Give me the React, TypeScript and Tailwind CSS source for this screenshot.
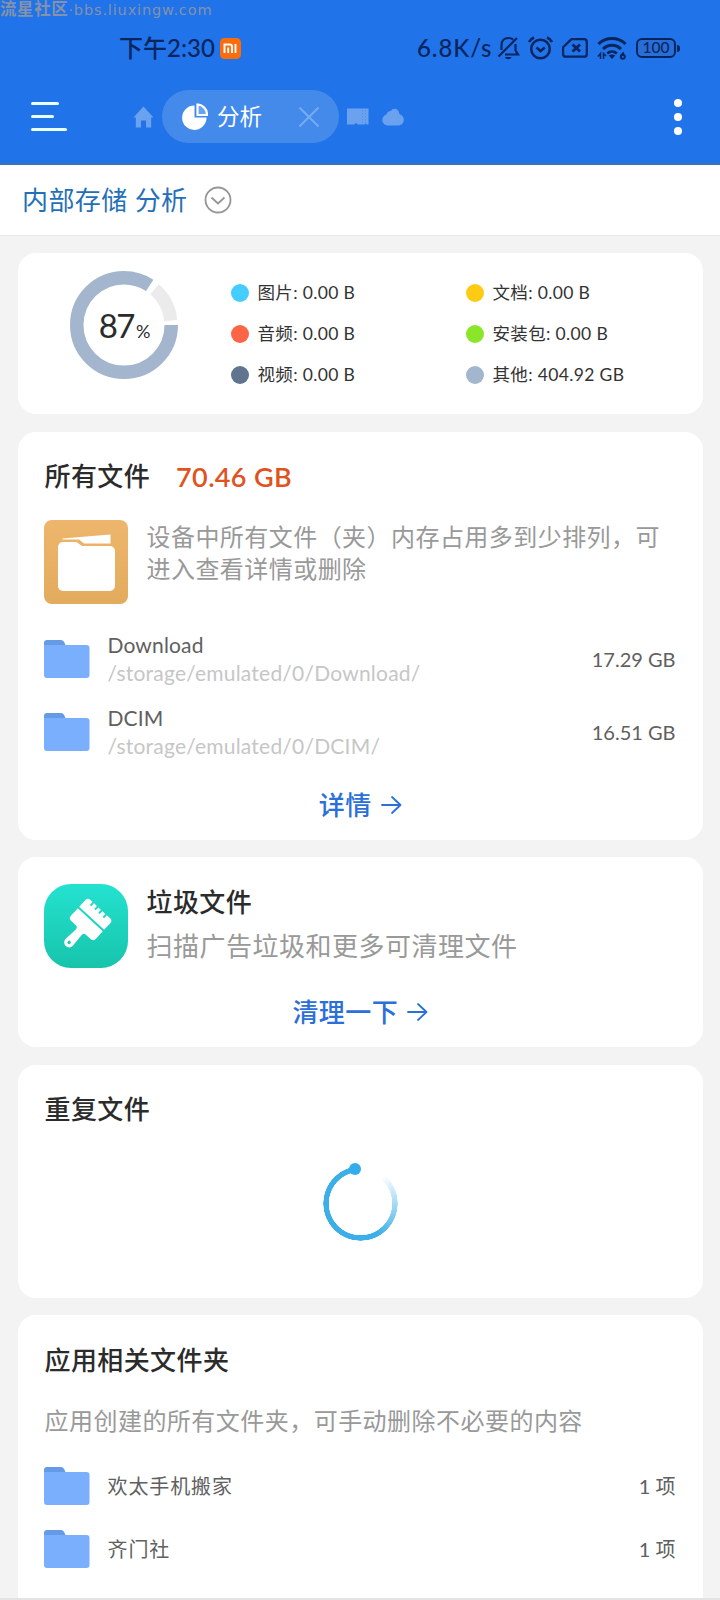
import React, { ReactNode } from "react";

const LEGEND = [
  { label: "图片: 0.00 B", dot: "bg-[#46cdff]" },
  { label: "文档: 0.00 B", dot: "bg-[#fdcb14]" },
  { label: "音频: 0.00 B", dot: "bg-[#fd6546]" },
  { label: "安装包: 0.00 B", dot: "bg-[#8be62a]" },
  { label: "视频: 0.00 B", dot: "bg-[#60748f]" },
  { label: "其他: 404.92 GB", dot: "bg-[#a2b6cd]" },
];

const FILES = [
  { name: "Download", path: "/storage/emulated/0/Download/", size: "17.29 GB" },
  { name: "DCIM", path: "/storage/emulated/0/DCIM/", size: "16.51 GB" },
];

const APP_FOLDERS = [
  { name: "欢太手机搬家", count: "1 项" },
  { name: "齐门社", count: "1 项" },
];

const Card = ({ children, className = "" }: { children: ReactNode; className?: string }) => (
  <section className={`bg-white rounded-[18px] pl-[26.5px] pr-[27px] shrink-0 ${className}`}>{children}</section>
);

const FolderIcon = () => (
  <svg width="46" height="38" viewBox="0 0 46 38" className="shrink-0">
    <path d="M0 3a3 3 0 0 1 3-3h13c3 0 4 1 5.500 5l2 5H0z" fill="#659ae6" />
    <path d="M0 5h42.500a3 3 0 0 1 3 3v27a3 3 0 0 1-3 3H3a3 3 0 0 1-3-3z" fill="#7aaffd" />
  </svg>
);

const Action = ({ label, className = "" }: { label: string; className?: string }) => (
  <div className={`flex items-center justify-center gap-[9px] text-[#2a70d8] ${className}`}>
    <span className="text-[26px] leading-none font-medium tracking-[0.4px]">{label}</span>
    <svg width="21" height="20" viewBox="0 0 21 20" fill="none" stroke="currentColor" strokeWidth="1.8" strokeLinecap="round" strokeLinejoin="round">
      <path d="M1 10h18.500M11 2l8.500 8-8.500 8" />
    </svg>
  </div>
);

const StatusBar = () => (
  <div className="flex h-[48px] items-center pl-[119px] text-[#08255f]">
    <span className="w-[101px] whitespace-nowrap text-[24px] leading-none font-medium">下午2:30</span>
    <svg width="21" height="21" viewBox="0 0 21 21">
      <rect width="21" height="21" rx="4.500" fill="#fb6c0c" />
      <path d="M4.500 15V6.500h5.200c1.500 0 2.300.8 2.300 2.300V15M8.200 9.500V15M15.500 6V15" fill="none" stroke="#fff" strokeWidth="1.900" />
    </svg>
    <span className="ml-[176px] w-[80px] whitespace-nowrap text-[24px] leading-none font-medium tracking-[0.9px]">6.8K/s</span>
    {/* muted bell */}
    <svg width="23" height="24" viewBox="0 0 23 24" fill="none" stroke="currentColor" strokeWidth="2.200">
      <path d="M4.500 14V9.500C4.500 4.500 7.500 2 11.500 2c2 0 3.500.6 4.700 1.600M18.500 8v6.500l2.500 4H8M1.500 20.500 20 2" />
      <path d="M8 21h6.500c-.8 3-5.700 3-6.500 0z" fill="currentColor" stroke="none" />
    </svg>
    {/* alarm */}
    <svg className="ml-[8px]" width="25" height="24" viewBox="0 0 25 24" fill="none" stroke="currentColor" strokeWidth="2.500">
      <circle cx="12.500" cy="13" r="9.300" />
      <path d="M1 6q1.500-3 5-4.500M24 6q-1.500-3-5-4.500M8.500 11.500l4 3.500 4.300-3.500" />
    </svg>
    {/* sim off */}
    <svg className="ml-[9px]" width="26" height="20" viewBox="0 0 26 20" fill="none" stroke="currentColor" strokeWidth="2.200">
      <path d="M9.500 1.100H22a2.800 2.800 0 0 1 2.800 2.800v12a2.800 2.800 0 0 1-2.800 2.800H3.900a2.800 2.800 0 0 1-2.800-2.800V9.200z" strokeLinejoin="round" />
      <path d="m10.500 6.500 7.500 7M18 6.500l-7.500 7" strokeWidth="2.800" />
    </svg>
    {/* wifi 6 */}
    <svg className="ml-[9px]" width="30" height="24" viewBox="0 0 30 24" fill="none" stroke="currentColor" strokeWidth="3">
      <path d="M1.500 8c7.500-7.300 19.500-7.300 27 0M6 13c5.300-5 12.700-5 18 0" />
      <path d="M10.200 17.500c2.900-2.700 6.700-2.700 9.600 0" strokeWidth="2.600" />
      <path d="m11.800 19.500 3.200 3.500 3.200-3.500c-2-1.200-4.400-1.200-6.400 0z" fill="currentColor" stroke="none" />
      <path d="M1 20.500l2.500-3V23M6.500 23v-5.500L9 20" strokeWidth="1.500" />
      <path d="M26.800 16.500c-2 1.500-3 3-3 4.400" strokeWidth="1.900" />
      <circle cx="25.800" cy="20.800" r="2" strokeWidth="1.900" />
    </svg>
    <div className="ml-[9px] flex h-[20px] w-[40px] items-center justify-center rounded-[6px] border-2 border-current bg-[#3467bd]/40 text-[15.5px] font-medium leading-none">
      100
    </div>
    <div className="ml-px h-[7px] w-[3px] rounded-r-full bg-current" />
  </div>
);

const TabBar = () => (
  <div className="flex h-[53px] items-center pl-[31px]">
    <div className="flex w-[102px] flex-col gap-[10px]">
      <div className="h-[3px] w-[28px] rounded-full bg-[#e8ffff]" />
      <div className="h-[3px] w-[22.500px] rounded-full bg-[#e8ffff]" />
      <div className="h-[3px] w-[36px] rounded-full bg-[#e8ffff]" />
    </div>
    <svg width="21" height="22" viewBox="0 0 21 22" fill="#6aa2f0">
      <path d="M10.500.5 20.500 11.500h-2.300V21.500H13v-7H8v7H2.800v-10H.5z" />
    </svg>
    <div className="ml-[8px] flex h-[53px] w-[177px] items-center rounded-full bg-[#438aea] pl-[20px] text-white">
      <svg width="26" height="27" viewBox="0 0 26 27">
        <path d="M12.500 2.500v12h12A12.200 12.200 0 1 1 12.500 2.500z" fill="#fff" />
        <path d="M15.500 1.500V12h9.500A10 10 0 0 0 15.500 1.500z" fill="#69a2ef" stroke="#fff" strokeWidth="2.200" />
      </svg>
      <span className="ml-[9px] w-[82px] whitespace-nowrap pt-px text-[22.500px] leading-none">分析</span>
      <svg width="20" height="20" viewBox="0 0 20 20" stroke="#76abf1" strokeWidth="2">
        <path d="M.5.500l19 19M19.500.500l-19 19" />
      </svg>
    </div>
    <svg className="ml-[8px]" width="22" height="18" viewBox="0 0 22 18">
      <path d="M0 .5h21.500v16h-2l-1-1-1 1H11l-2-1.500-2 1.500H0z" fill="#6aa2f0" />
      <path d="M15.500 2v13M18.500 2v13" stroke="#5292ec" strokeDasharray="1.500 1.500" />
    </svg>
    <svg className="ml-[13px]" width="22" height="18" viewBox="0 0 22 18" fill="#6aa2f0">
      <path d="M6 17.500a5.500 5.500 0 0 1-4.600-8.700C2.300 7.300 3.300 6.800 4.500 6.500 5 3.500 8 3 9 3 10.500-.5 16.500-.5 17.500 6.200c2.700.8 4.300 3 4.300 5.500 0 3.300-2.500 5.800-5.800 5.800z" />
    </svg>
    <div className="ml-[270px] flex flex-col gap-[6px]">
      <div className="size-2 rounded-full bg-white" />
      <div className="size-2 rounded-full bg-white" />
      <div className="size-2 rounded-full bg-white" />
    </div>
  </div>
);

export default function App() {
  return (
    <div className="flex h-[1600px] w-[720px] flex-col overflow-hidden bg-[#f3f3f3] font-['Lato','Noto_Sans_CJK_SC',sans-serif] text-[#2b2b2b]">
      <header className="h-[165px] shrink-0 border-b-2 border-[#3a73b8] bg-[#2073e8]">
        <div className="flex h-[24px] items-start pt-[1px] text-[#8492ab]">
          <span className="whitespace-nowrap text-[16.5px] font-bold leading-[17px] tracking-[0.6px]">流星社区</span>
          <span className="whitespace-nowrap font-['DejaVu_Sans',sans-serif] text-[14.500px] leading-[18px] tracking-[0.850px]">·bbs.liuxingw.com</span>
        </div>
        <StatusBar />
        <div className="pt-[18px]">
          <TabBar />
        </div>
      </header>

      <div className="flex h-[71px] shrink-0 items-center border-b border-[#e8e8e8] bg-white pl-[22px]">
        <span className="w-[182px] whitespace-nowrap text-[26px] leading-none tracking-[0.4px] text-[#2470b8]">内部存储 分析</span>
        <svg width="28" height="28" viewBox="0 0 28 28" fill="none" stroke="#969696" strokeWidth="1.800">
          <circle cx="14" cy="14" r="12.500" />
          <path d="m7.500 11.500 6.500 6 6.500-6" />
        </svg>
      </div>

      <main className="flex flex-1 flex-col gap-[17.500px] overflow-hidden px-[17.500px] pt-[17px]">
        {/* Usage chart */}
        <Card className="flex h-[161px]">
          <div className="relative ml-[26px] mt-[18px] size-[108px] shrink-0">
            <svg width="108" height="108" viewBox="0 0 108 108" fill="none" strokeWidth="13.500">
              <circle cx="54" cy="54" r="47.250" stroke="#a3b6cd" pathLength="360" strokeDasharray="303 57" />
              <circle cx="54" cy="54" r="47" stroke="#ebebec" strokeWidth="13" pathLength="360" strokeDasharray="44 316" strokeDashoffset="-310.500" />
            </svg>
            <div className="absolute inset-0 flex items-baseline justify-center pl-[1px] pt-[38px] leading-none">
              <span className="text-[33px] leading-none tracking-[-1.5px]">87</span>
              <span className="ml-[2px] text-[18px] leading-none">%</span>
            </div>
          </div>
          <div className="ml-[53px] mt-[19px] grid h-[123px] grid-cols-[235px_200px] grid-rows-3">
            {LEGEND.map((item) => (
              <div key={item.label} className="flex items-center gap-[8.5px]">
                <span className={`size-[18px] rounded-full ${item.dot}`} />
                <span className="whitespace-nowrap pt-px text-[17.5px] leading-none tracking-[0.350px] text-[#333]">{item.label}</span>
              </div>
            ))}
          </div>
        </Card>

        {/* All files */}
        <Card className="h-[408px]">
          <div className="flex h-[88px] items-center gap-[26px] pl-[0.5px] pt-[1px] text-[26px] font-medium leading-none">
            <h2 className="tracking-[0.4px]">所有文件</h2>
            <span className="whitespace-nowrap text-[27px] font-semibold tracking-[0.350px] text-[#e0531f]">70.46 GB</span>
          </div>
          <div className="flex h-[102.5px] items-start">
            <svg width="84" height="84" viewBox="0 0 84 84" className="shrink-0">
              <defs>
                <linearGradient id="amber" x1="0" y1="0" x2="0" y2="1">
                  <stop offset="0" stopColor="#edb66c" />
                  <stop offset="1" stopColor="#e3ab5d" />
                </linearGradient>
              </defs>
              <rect width="84" height="84" rx="8" fill="url(#amber)" />
              <path d="M18.500 18.500 66.500 14.500V23.500H40l-5-4H18.500z" fill="#fff" />
              <path d="M14 27a5 5 0 0 1 5-5h13.500l5.500 4h28a5 5 0 0 1 5 5v35a5 5 0 0 1-5 5H19a5 5 0 0 1-5-5z" fill="#fff" />
            </svg>
            <p className="ml-[18.5px] w-[518px] pt-px text-[24px] leading-[32.700px] tracking-[0.45px] text-[#999]">
              设备中所有文件（夹）内存占用多到少排列，可<br />进入查看详情或删除
            </p>
          </div>
          {FILES.map((file) => (
            <div key={file.name} className="flex h-[73.3px] items-center text-[#606060]">
              <FolderIcon />
              <div className="ml-[17.5px] flex-1">
                <p className="text-[21px] leading-[28px] tracking-[0.15px]">{file.name}</p>
                <p className="text-[21px] leading-[28px] tracking-[0.22px] text-[#c6c6c6]">{file.path}</p>
              </div>
              <span className="whitespace-nowrap text-[20px] leading-none">{file.size}</span>
            </div>
          ))}
          <Action label="详情" className="h-[72px] pl-[1px]" />
        </Card>

        {/* Junk files */}
        <Card className="h-[190px] pt-[27px]">
          <div className="flex h-[84px]">
            <svg width="84" height="84" viewBox="0 0 84 84" className="shrink-0">
              <defs>
                <linearGradient id="mint" x1="0" y1="0" x2="0" y2="1">
                  <stop offset="0" stopColor="#24e2d0" />
                  <stop offset="1" stopColor="#17c4ab" />
                </linearGradient>
              </defs>
              <rect width="84" height="84" rx="27" fill="url(#mint)" />
              {/* brush, drawn upright and turned */}
              <g transform="translate(47 35) rotate(43)" fill="#fff">
                <path d="M-17-1v-9a3.500 3.500 0 0 1 3.500-3.500h3v4h2v-4h4v4h2v-4H1v4h2v-4h4v4h2v-4h4.500A3.500 3.500 0 0 1 17-10v9z" />
                <path d="M-17 1h34v10a4 4 0 0 1-4 4H6.500Q4 15 4 18l1 14a5 5 0 0 1-10 0L-4 18q0-3-2.500-3H-13a4 4 0 0 1-4-4z" />
                <circle cx="0" cy="32" r="1.700" fill="#1dcdb7" />
              </g>
            </svg>
            <div className="ml-[18.5px] flex flex-col gap-[18px] pt-[5px] text-[26px] leading-[26px]">
              <h2 className="font-medium tracking-[0.4px]">垃圾文件</h2>
              <p className="tracking-[0.5px] text-[#999]">扫描广告垃圾和更多可清理文件</p>
            </div>
          </div>
          <Action label="清理一下" className="h-[79px] pl-[1px] pt-[9px]" />
        </Card>

        {/* Duplicate files */}
        <Card className="h-[233px]">
          <h2 className="flex h-[88px] items-center pl-[0.5px] text-[26px] font-medium leading-none tracking-[0.4px]">重复文件</h2>
          <div className="relative left-[0.5px] mx-auto mt-[13.5px] size-[75px]">
            <div className="size-full rounded-full bg-[conic-gradient(transparent_35deg,#3cafe800_40deg,#3cafe8_150deg,#3cafe8_352deg,transparent_352deg)] [mask:radial-gradient(circle,transparent_31.5px,#000_32px,#000_37px,transparent_37.5px)]" />
            <div className="absolute left-[26.500px] top-[-3px] size-[12px] rounded-full bg-[#33acec]" />
          </div>
        </Card>

        {/* App folders */}
        <Card className="h-[300px]">
          <h2 className="flex h-[90px] items-center pl-[0.5px] text-[26px] font-medium leading-none tracking-[0.4px]">应用相关文件夹</h2>
          <p className="mb-[18px] whitespace-nowrap pl-[0.5px] pt-[1px] text-[24px] leading-[30px] tracking-[0.47px] text-[#999]">应用创建的所有文件夹，可手动删除不必要的内容</p>
          {APP_FOLDERS.map((folder) => (
            <div key={folder.name} className="flex h-[63px] items-center text-[#606060]">
              <FolderIcon />
              <span className="ml-[17.5px] flex-1 text-[20px] leading-none tracking-[0.9px]">{folder.name}</span>
              <span className="whitespace-nowrap text-[20px] leading-none">{folder.count}</span>
            </div>
          ))}
        </Card>
      </main>
      <div className="h-[2px] shrink-0 bg-[#e3e3e3]" />
    </div>
  );
}
